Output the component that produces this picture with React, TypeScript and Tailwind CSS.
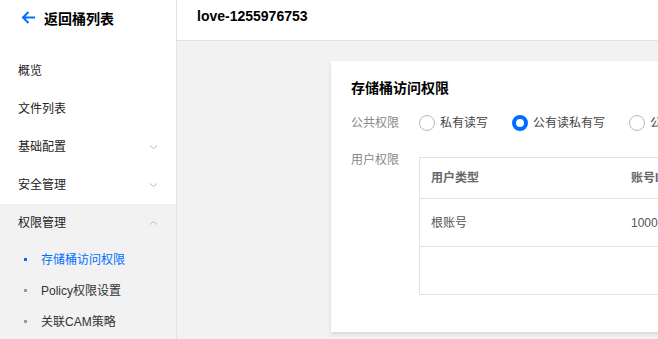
import React from "react";

const font = { fontFamily: '"Liberation Sans", "Noto Sans CJK SC", sans-serif' };

type MenuItem = {
  label: string;
  arrow?: "down" | "up";
};

const menu: MenuItem[] = [
  { label: "概览" },
  { label: "文件列表" },
  { label: "基础配置", arrow: "down" },
  { label: "安全管理", arrow: "down" },
];

const subMenu = ["存储桶访问权限", "Policy权限设置", "关联CAM策略"];

function Chevron({ dir }: { dir: "down" | "up" }) {
  return (
    <svg width="9" height="6" viewBox="0 0 9 6" className="text-[#bbbbbb]">
      <path
        d={dir === "down" ? "M1 1.5 L4.5 4.5 L8 1.5" : "M1 4.5 L4.5 1.5 L8 4.5"}
        fill="none"
        stroke="currentColor"
        strokeWidth="1"
      />
    </svg>
  );
}

function Radio({ label, checked }: { label: string; checked?: boolean }) {
  return (
    <div className="flex items-center gap-[5px] mr-[24px] shrink-0">
      {checked ? (
        <span className="w-4 h-4 rounded-full border-[4px] border-[#006eff] bg-white" />
      ) : (
        <span className="w-4 h-4 rounded-full border border-[#b8b8b8] bg-white" />
      )}
      <span className="text-[12px] text-[#444]">{label}</span>
    </div>
  );
}

function Sidebar() {
  return (
    <aside className="w-[177px] shrink-0 h-full bg-white border-r border-[#e2e2e2] flex flex-col">
      <div className="h-[52px] flex items-start pt-[9px] pl-[21px] gap-[8px]">
        <svg width="15" height="15" viewBox="0 0 15 15" className="mt-[1px]">
          <path
            d="M14 7.5 H2 M7.5 2 L2 7.5 L7.5 13"
            fill="none"
            stroke="#006eff"
            strokeWidth="2"
          />
        </svg>
        <span className="text-[14px] font-bold text-[#000]">返回桶列表</span>
      </div>
      {menu.map((m) => (
        <div key={m.label} className="h-[38px] flex items-center justify-between pl-[18px] pr-[18px]">
          <span className="text-[12px] text-[#222]">{m.label}</span>
          {m.arrow && <Chevron dir={m.arrow} />}
        </div>
      ))}
      <div className="flex-1 bg-[#f2f2f2]">
        <div className="h-[38px] flex items-center justify-between pl-[18px] pr-[18px]">
          <span className="text-[12px] text-[#222]">权限管理</span>
          <Chevron dir="up" />
        </div>
        <div className="pt-[2px]">
          {subMenu.map((s, i) => (
            <div key={s} className="h-[31px] flex items-center pl-[24px] gap-[14px]">
              <span className={`w-[3px] h-[3px] ${i === 0 ? "bg-[#006eff]" : "bg-[#999]"}`} />
              <span className={`text-[12px] ${i === 0 ? "text-[#006eff]" : "text-[#333]"}`}>{s}</span>
            </div>
          ))}
        </div>
      </div>
    </aside>
  );
}

function App() {
  return (
    <div style={font} className="w-[658px] h-[339px] flex overflow-hidden bg-[#f2f2f2]">
      <Sidebar />
      <main className="flex-1 min-w-0 flex flex-col overflow-hidden">
        <header className="h-[41px] shrink-0 bg-white border-b border-[#e2e2e2] flex items-start pt-[6px] pl-[20px]">
          <span className="text-[14px] font-bold text-[#000]">love-1255976753</span>
        </header>
        <div className="flex-1 pl-[154px] pt-[20px]">
          <div className="w-[600px] bg-white shadow-[0_2px_4px_rgba(0,0,0,0.12)] px-5 pt-[18px] pb-[37px]">
            <h2 className="text-[14px] font-bold text-[#000] leading-[18px]">存储桶访问权限</h2>
            <div className="flex items-center mt-[17px]">
              <span className="w-[68px] shrink-0 text-[12px] text-[#888]">公共权限</span>
              <Radio label="私有读写" />
              <Radio label="公有读私有写" checked />
              <Radio label="公有读写" />
            </div>
            <div className="flex items-start mt-[25px]">
              <span className="w-[68px] shrink-0 text-[12px] text-[#888] mt-[-6px]">用户权限</span>
              <div className="flex-1 border border-[#e2e2e2] text-[12px]">
                <div className="h-[41px] flex items-center border-b border-[#e2e2e2] px-[11px] font-bold text-[#666]">
                  <span className="w-[200px]">用户类型</span>
                  <span>账号ID</span>
                </div>
                <div className="h-[48px] flex items-center border-b border-[#e2e2e2] px-[11px] text-[#555]">
                  <span className="w-[200px]">根账号</span>
                  <span>100000000001</span>
                </div>
                <div className="h-[47px]" />
              </div>
            </div>
          </div>
        </div>
      </main>
    </div>
  );
}

export default App;
